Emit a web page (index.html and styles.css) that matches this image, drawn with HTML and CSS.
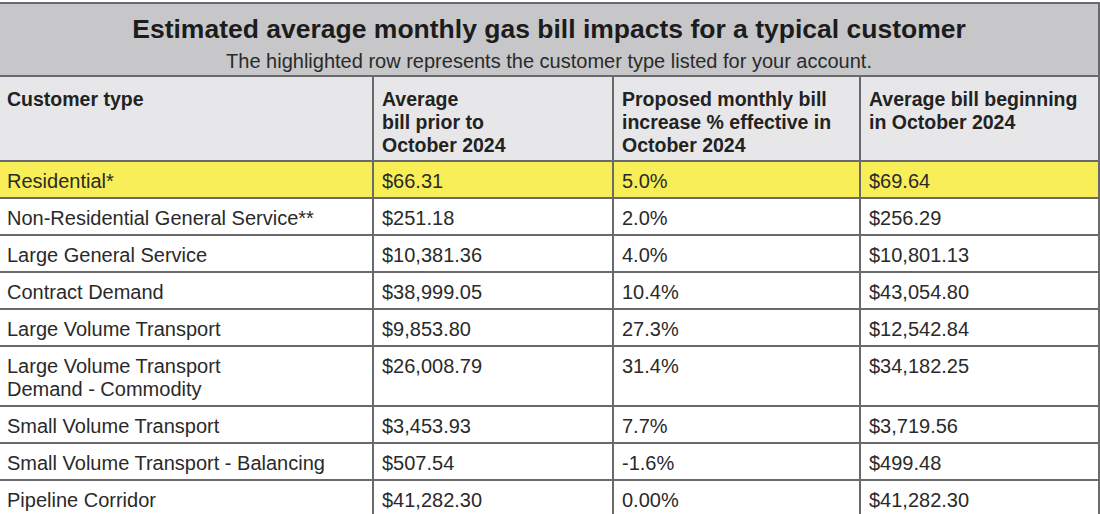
FILE: index.html
```html
<!DOCTYPE html>
<html lang="en">
<head>
<meta charset="utf-8">
<title>Estimated average monthly gas bill impacts</title>
<link rel="stylesheet" href="styles.css">
</head>
<body>
<table class="bill-table">
  <colgroup>
    <col class="c1"><col class="c2"><col class="c3"><col class="c4">
  </colgroup>
  <thead>
    <tr class="title-row">
      <th colspan="4">
        <div class="title">Estimated average monthly gas bill impacts for a typical customer</div>
        <div class="subtitle">The highlighted row represents the customer type listed for your account.</div>
      </th>
    </tr>
    <tr class="head-row">
      <th>Customer type</th>
      <th>Average<br>bill prior to<br>October 2024</th>
      <th>Proposed monthly bill<br>increase % effective in<br>October 2024</th>
      <th>Average bill beginning<br>in October 2024</th>
    </tr>
  </thead>
  <tbody>
    <tr class="hl"><td>Residential*</td><td>$66.31</td><td>5.0%</td><td>$69.64</td></tr>
    <tr><td>Non-Residential General Service**</td><td>$251.18</td><td>2.0%</td><td>$256.29</td></tr>
    <tr><td>Large General Service</td><td>$10,381.36</td><td>4.0%</td><td>$10,801.13</td></tr>
    <tr><td>Contract Demand</td><td>$38,999.05</td><td>10.4%</td><td>$43,054.80</td></tr>
    <tr><td>Large Volume Transport</td><td>$9,853.80</td><td>27.3%</td><td>$12,542.84</td></tr>
    <tr><td>Large Volume Transport<br>Demand - Commodity</td><td>$26,008.79</td><td>31.4%</td><td>$34,182.25</td></tr>
    <tr><td>Small Volume Transport</td><td>$3,453.93</td><td>7.7%</td><td>$3,719.56</td></tr>
    <tr><td>Small Volume Transport - Balancing</td><td>$507.54</td><td>-1.6%</td><td>$499.48</td></tr>
    <tr><td>Pipeline Corridor</td><td>$41,282.30</td><td>0.00%</td><td>$41,282.30</td></tr>
  </tbody>
</table>
</body>
</html>
```

FILE: styles.css
```css
html, body {
  margin: 0;
  padding: 0;
  background: #ffffff;
}

body {
  font-family: "Liberation Sans", Arial, Helvetica, sans-serif;
  color: #222;
  overflow: hidden;
}

.bill-table {
  width: 1099px;
  border-collapse: collapse;
  table-layout: fixed;
  margin-top: 2px;
}

.c1 { width: 373px; }
.c2 { width: 240px; }
.c3 { width: 247px; }
.c4 { width: 239px; }

.bill-table th,
.bill-table td {
  border: 2px solid #6a6a6c;
  text-align: left;
  vertical-align: top;
}

.bill-table tr > :first-child {
  border-left: none;
}

.title-row th {
  background: #c7c7c9;
  text-align: center;
  height: 71px;
  padding: 0;
  vertical-align: top;
}

.title {
  font-size: 26.5px;
  font-weight: 700;
  color: #1c1c1c;
  line-height: 30px;
  padding-top: 10px;
}

.subtitle {
  font-size: 20px;
  font-weight: 400;
  color: #2a2a2a;
  line-height: 22px;
  padding-top: 6px;
}

.head-row th {
  background: #e7e7e9;
  font-size: 19.5px;
  font-weight: 700;
  line-height: 23px;
  padding: 11px 8px 3px 8px;
  color: #222;
}

.bill-table td {
  font-size: 20px;
  line-height: 23px;
  padding: 8px 8px 4px 8px;
  color: #2a2a2a;
}

.head-row th:first-child,
.bill-table td:first-child {
  padding-left: 7px;
}

.hl td {
  background: #f8ee58;
}
```
